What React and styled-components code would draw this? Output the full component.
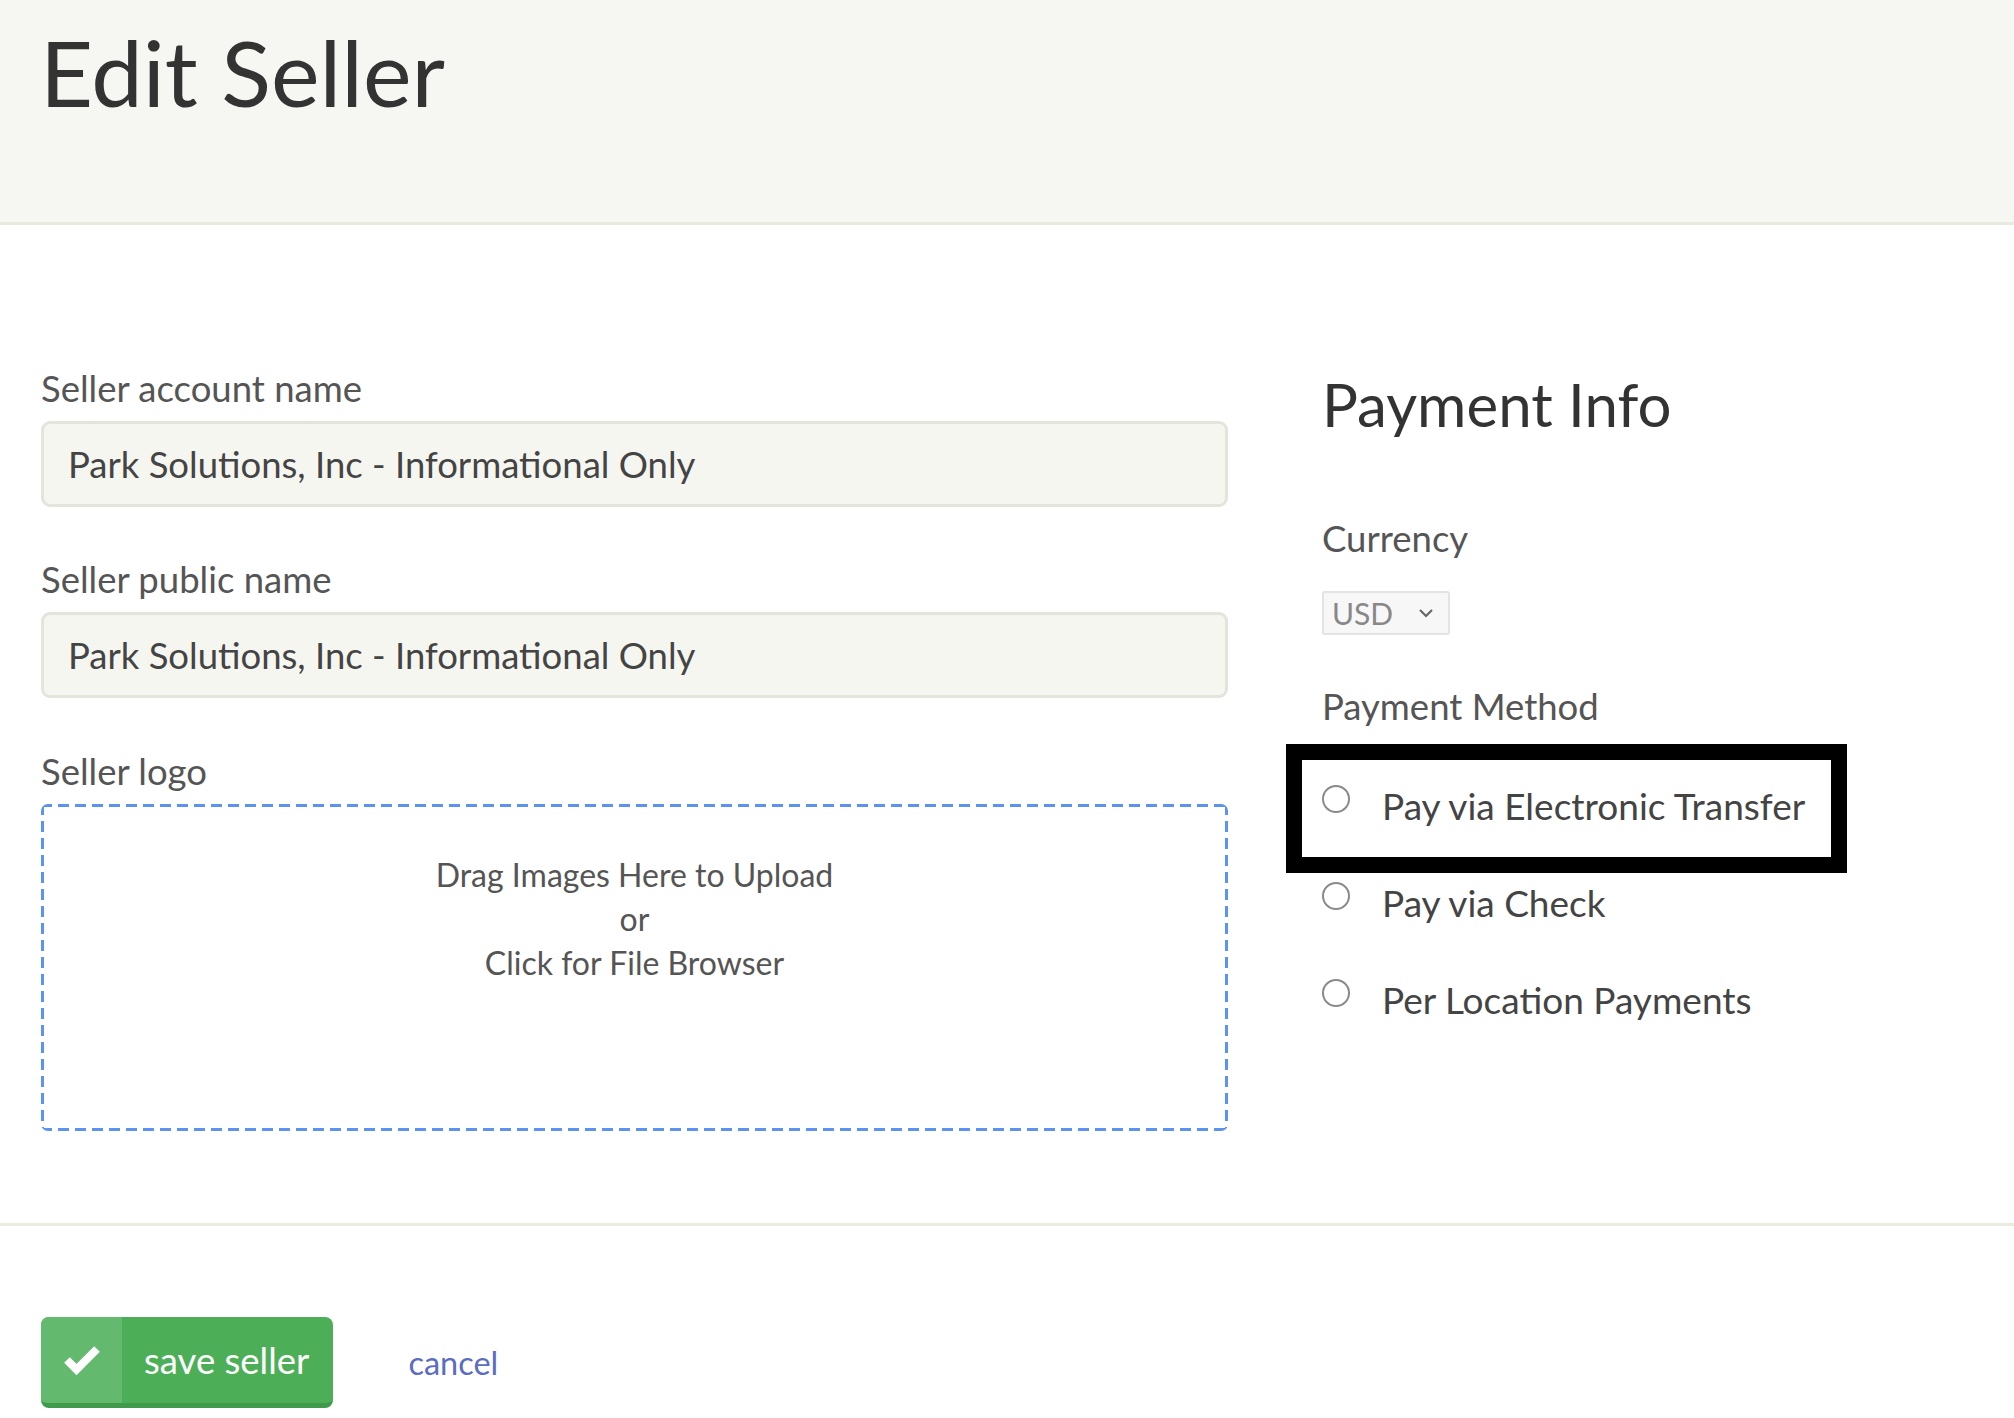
import React, { useState } from 'react'
import styled, { createGlobalStyle } from 'styled-components'

const GlobalStyle = createGlobalStyle`
  html, body {
    margin: 0;
    padding: 0;
    background: #ffffff;
  }
  body {
    font-family: Lato, 'Open Sans', 'Liberation Sans', sans-serif;
    color: #444;
  }
  * {
    box-sizing: border-box;
  }
`

const Page = styled.div`
  width: 2014px;
  min-height: 1418px;
  background: #fff;
  overflow: hidden;
`

const Header = styled.header`
  height: 225px;
  background: #f6f6f2;
  border-bottom: 3px solid #e9e9e1;
  padding: 17px 0 0 40px;
`

const Title = styled.h1`
  margin: 0;
  font-size: 92px;
  font-weight: 400;
  line-height: 1.2;
  color: #333;
`

const Body = styled.main`
  display: flex;
  align-items: flex-start;
  gap: 94px;
  padding: 143px 0 0 41px;
  height: 1001px;
  border-bottom: 3px solid #ebebe2;
`

const LeftCol = styled.section`
  width: 1187px;
  display: flex;
  flex-direction: column;
`

const RightCol = styled.section`
  display: flex;
  flex-direction: column;
`

const Field = styled.div`
  display: flex;
  flex-direction: column;
  gap: 13px;
  margin-bottom: ${(p) => p.$space || 0}px;
`

const Label = styled.label`
  font-size: 36.5px;
  line-height: 40px;
  color: #555;
`

const TextInput = styled.input`
  width: 100%;
  height: 86px;
  padding: 0 24px;
  background: #f6f6f1;
  border: 3px solid #e4e4dc;
  border-radius: 9px;
  font-family: inherit;
  font-size: 36.5px;
  color: #444;
  outline: none;
`

// dashes drawn with gradients so their length can be set
const dash = '#5b93ee'
const DropZone = styled.div`
  height: 327px;
  border-radius: 7px;
  background:
    repeating-linear-gradient(90deg, ${dash} 0 11px, transparent 11px 17px) top left / 100% 3px no-repeat,
    repeating-linear-gradient(90deg, ${dash} 0 11px, transparent 11px 17px) bottom left / 100% 3px no-repeat,
    repeating-linear-gradient(180deg, ${dash} 0 11px, transparent 11px 17px) top left / 3px 100% no-repeat,
    repeating-linear-gradient(180deg, ${dash} 0 11px, transparent 11px 17px) top right / 3px 100% no-repeat;
  display: flex;
  flex-direction: column;
  align-items: center;
  padding-top: 49px;
  font-size: 32px;
  line-height: 44px;
  color: #555;
  cursor: pointer;
`

const SectionTitle = styled.h2`
  margin: 0 0 78px;
  font-size: 60px;
  font-weight: 400;
  line-height: 1.2;
  color: #333;
`

const Select = styled.div`
  margin-top: 33px;
  margin-bottom: 51px;
  width: 128px;
  height: 44px;
  display: flex;
  align-items: center;
  justify-content: space-between;
  padding: 0 14px 0 8px;
  background: #f7f7f7;
  border: 2px solid #e3e3e3;
  border-radius: 3px;
  font-size: 30px;
  color: #888;
`

const Options = styled.div`
  margin-top: 34px;
  display: flex;
  flex-direction: column;
`

const Option = styled.label`
  display: flex;
  align-items: center;
  gap: 32px;
  height: 97px;
  width: 529px;
  margin-left: -20px;
  padding: 0 0 6px 20px;
  font-size: 37px;
  color: #444;
  cursor: pointer;
  outline: ${(p) => (p.$marked ? '16px solid #000' : 'none')};
`

const Radio = styled.span`
  width: 28px;
  height: 28px;
  flex-shrink: 0;
  margin-bottom: 14px;
  border-radius: 50%;
  border: 2px solid ${(p) => (p.$checked ? '#4a7be0' : '#8a8a8a')};
  background: ${(p) => (p.$checked ? 'radial-gradient(#4a7be0 40%, #fff 45%)' : '#fff')};
`

const Footer = styled.footer`
  display: flex;
  align-items: center;
  gap: 75px;
  padding: 91px 0 0 41px;
`

const SaveButton = styled.button`
  display: flex;
  align-items: stretch;
  height: 91px;
  padding: 0;
  border: none;
  border-radius: 8px;
  overflow: hidden;
  background: #4caf58;
  border-bottom: 5px solid #3f9a4b;
  color: #fff;
  font-family: inherit;
  font-size: 36.5px;
  cursor: pointer;
`

const ButtonIcon = styled.span`
  width: 81px;
  display: flex;
  align-items: center;
  justify-content: center;
  background: #63b96d;
`

const ButtonText = styled.span`
  display: flex;
  align-items: center;
  padding: 0 24px 0 22px;
`

const CancelLink = styled.a`
  font-size: 32.5px;
  color: #5b6cc2;
  text-decoration: none;
  cursor: pointer;
`

const methods = ['Pay via Electronic Transfer', 'Pay via Check', 'Per Location Payments']

export default function App() {
  const [method, setMethod] = useState(null)

  return (
    <Page>
      <GlobalStyle />
      <Header>
        <Title>Edit Seller</Title>
      </Header>

      <Body>
        <LeftCol>
          <Field $space={52}>
            <Label>Seller account name</Label>
            <TextInput defaultValue="Park Solutions, Inc - Informational Only" />
          </Field>
          <Field $space={53}>
            <Label>Seller public name</Label>
            <TextInput defaultValue="Park Solutions, Inc - Informational Only" />
          </Field>
          <Field>
            <Label>Seller logo</Label>
            <DropZone>
              <span>Drag Images Here to Upload</span>
              <span>or</span>
              <span>Click for File Browser</span>
            </DropZone>
          </Field>
        </LeftCol>

        <RightCol>
          <SectionTitle>Payment Info</SectionTitle>
          <Label>Currency</Label>
          <Select>
            <span>USD</span>
            <svg width="16" height="10" viewBox="0 0 16 10" fill="none">
              <path d="M2 2l6 6 6-6" stroke="#666" strokeWidth="2.2" />
            </svg>
          </Select>
          <Label>Payment Method</Label>
          <Options>
            {methods.map((m, i) => (
              <Option key={m} $marked={i === 0} onClick={() => setMethod(m)}>
                <Radio $checked={method === m} />
                {m}
              </Option>
            ))}
          </Options>
        </RightCol>
      </Body>

      <Footer>
        <SaveButton>
          <ButtonIcon>
            <svg width="40" height="32" viewBox="0 0 40 32" fill="none">
              <path d="M5 16l9.5 9.5L35 5" stroke="#fff" strokeWidth="8" strokeLinejoin="miter" />
            </svg>
          </ButtonIcon>
          <ButtonText>save seller</ButtonText>
        </SaveButton>
        <CancelLink>cancel</CancelLink>
      </Footer>
    </Page>
  )
}
